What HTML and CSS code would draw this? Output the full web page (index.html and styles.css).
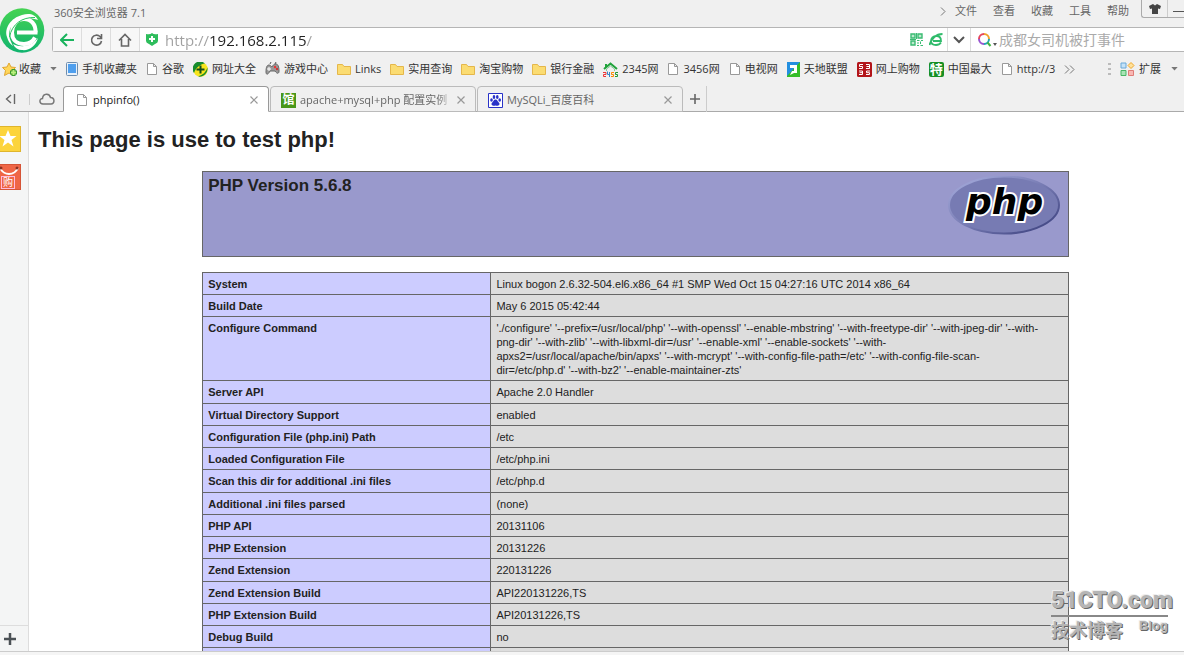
FILE: index.html
```html
<!DOCTYPE html>
<html lang="zh-CN">
<head>
<meta charset="utf-8">
<title>phpinfo()</title>
<link rel="stylesheet" href="styles.css">
</head>
<body>
<svg class="defs" width="0" height="0" aria-hidden="true">
  <symbol id="file" viewBox="0 0 12 14"><path d="M1.5 1.5h6l3 3v8h-9zM7.500 1.500v3h3" fill="#fff" stroke="#999"/></symbol>
  <symbol id="folder" viewBox="0 0 14 14"><path d="M.5 2.500h5l1.500 2h6.500v8H.5z" fill="#fbdc72" stroke="#e5b74a"/></symbol>
  <symbol id="close" viewBox="0 0 8 8"><path d="M.5.5l7 7M7.500.5l-7 7" fill="none" stroke="#999" stroke-width="1.200"/></symbol>
  <symbol id="caret" viewBox="0 0 8 5"><path d="M0 0h8L4 4.500z" fill="#777"/></symbol>
</svg>
<header class="chrome">
  <div class="top">
    <svg class="logo" viewBox="0 0 46 46" role="img" aria-label="360">
      <defs><linearGradient id="lg" x2="0" y2="1"><stop stop-color="#45d352"/><stop offset="1" stop-color="#10b36f"/></linearGradient></defs>
      <circle cx="22" cy="22.500" r="22.300" fill="url(#lg)"/>
      <path d="M35.500 24.500C36 16 31 11 24 11S12 17 12 24.500 17 36 24 36c5 0 9-2.500 11-6.500" fill="none" stroke="#fff" stroke-width="4"/>
      <path d="M17 22.500h20.500v4H17z" fill="#fff"/>
      <path d="M38 12C35 6 29 5 22 7 11 10 4 20 7 29c1 4 3 7 6 9-3-6-5-10-3-17C13 13 25 7 38 12z" fill="#fff"/>
      <path d="M35 9.500C22 9 12 16 9.500 29" fill="none" stroke="#27c55e" stroke-width="1"/>
      <path d="M13 36c8 4 18 3 25-6-2 8-9 13-16 12-4 0-7-2-9-6z" fill="#fff"/>
    </svg>
    <div class="rows">
      <div class="titlebar">
        <span class="apptitle">360安全浏览器 7.1</span>
        <nav class="menu">
          <svg width="6" height="9"><path d="M1 .5l4 4-4 4" fill="none" stroke="#777"/></svg>
          <button>文件</button><button>查看</button><button>收藏</button><button>工具</button><button>帮助</button>
        </nav>
        <div class="winbox">
          <button aria-label="皮肤"><svg width="12" height="10"><path d="M4 0l2 1.500L8 0l4 2-1 3-2-.5V10H3V4.500L1 5 0 2z" fill="#444"/></svg></button>
          <button aria-label="最小化"><svg width="11" height="10"><path d="M0 7.500h11" stroke="#555"/></svg></button>
        </div>
      </div>
      <div class="address">
        <button class="nav" aria-label="后退"><svg width="14" height="14"><path d="M7 1L1 7l6 6M1.500 7H14" fill="none" stroke="#19b35d" stroke-width="2"/></svg></button>
        <button class="nav" aria-label="刷新"><svg width="13" height="14"><path d="M11.500 8A5 5 0 1 1 10 3.500l1.500 1.500M11.500 1v4.500H7" fill="none" stroke="#666" stroke-width="1.600"/></svg></button>
        <button class="nav" aria-label="主页"><svg width="14" height="14"><path d="M1 7.500L7 1.500l6 6M3.500 6v7h7V6" fill="none" stroke="#666" stroke-width="1.600"/></svg></button>
        <svg class="shield" width="12" height="13"><path d="M0 1q4 1 6-1 2 2 6 1v7q0 2-3 3l-3 2-3-2Q0 10 0 8z" fill="#2ebd5c"/><path d="M6 3v6M3 6h6" stroke="#fff" stroke-width="2"/></svg>
        <input class="url" type="text" aria-label="地址" value="http://192.168.2.115/">
        <button class="tool" aria-label="二维码"><svg width="13" height="13"><path d="M1 1h4v4H1zM8 1h4v4H8zM1 8h4v4H1z" fill="#bfe9cf" stroke="#3abb72" stroke-width="1.400"/><path d="M7 7.500h2.500M11 7.500h2M8 9v2M10.500 8.500V11M7 12.500h2M10.500 12.500H13M6.500 0v6M0 6.500h6" fill="none" stroke="#3abb72"/></svg></button>
        <button class="tool" aria-label="极速模式"><svg width="14" height="13"><path d="M4 8h8c0-4-2-5-4.500-5C4 3 2 5 2 8c0 3 2 4 5 4 2 0 4-1 5-2.500M.5 12C2 6 7 1 13.500 1" fill="none" stroke="#30bb6b" stroke-width="1.800"/></svg></button>
        <button class="drop" aria-label="展开"><svg width="12" height="8"><path d="M1 1l5 5 5-5" fill="none" stroke="#555" stroke-width="2"/></svg></button>
        <svg class="mag" width="22" height="15"><path d="M7 2a5 5 0 0 0-5 5" stroke="#e5465c"/><path d="M2 7a5 5 0 0 0 5 5" stroke="#9855d0"/><path d="M7 12a5 5 0 0 0 5-5" stroke="#22a6b4"/><path d="M12 7a5 5 0 0 0-5-5" stroke="#f0a22c"/><path d="M10.500 10.500l3 3.500" stroke="#42b440"/><path class="solid" d="M16 11h4l-2 3z"/></svg>
        <input class="search" type="text" aria-label="搜索" placeholder="成都女司机被打事件">
      </div>
    </div>
  </div>
  <nav class="bookmarks">
    <a class="bm fav" href="#"><svg width="16" height="15"><path d="M7 1l2 4 4.500.5-3 3 1 5L7 11l-4.500 2.500 1-5-3-3L5 5z" fill="#ffd65a" stroke="#e0a62e"/><path d="M11.500 7v7M8 10.500h7" stroke="#3a9a30" stroke-width="4"/><path d="M11.500 8v5M9 10.500h5" stroke="#b9f07c" stroke-width="2"/></svg>收藏<svg class="tri" width="7" height="4"><use href="#caret"/></svg></a>
    <a class="bm" href="#"><svg width="12" height="14"><rect x=".5" y=".5" width="11" height="13" rx="1" fill="#e9f1fa" stroke="#6d8dae"/><path d="M2 2h8v9H2z" fill="#4f9fee"/></svg>手机收藏夹</a>
    <a class="bm" href="#"><svg width="12" height="14"><use href="#file"/></svg>谷歌</a>
    <a class="bm" href="#"><svg width="15" height="15"><circle cx="7.500" cy="7.500" r="7.300" fill="#f7e51c"/><path d="M1 11A7.300 7.300 0 0 1 12 1.500C8 2 3 5 1 11zM5 14.500c5 1 10-3 9.500-9C13 10 10 13 5 14.500z" fill="#168c2e"/><path d="M7.500 3.500v8M3.500 7.500h8" stroke="#164f1b" stroke-width="2"/></svg>网址大全</a>
    <a class="bm" href="#"><svg width="15" height="14"><path d="M1 10c0-5 1-7 3-7 1 0 2 1 3 2 1-2 2-3 4-3 2 0 3 3 3 7 0 3-2 3-4 0H5c-2 4-4 4-4 1z" fill="#999" stroke="#666"/><path d="M4 5v4M2 7h4" stroke="#fff"/><circle cx="10" cy="5" r="1.200" fill="#e33"/><circle cx="12" cy="7" r="1.200" fill="#c33"/><path d="M5 2l1-2M10 2l1-2" stroke="#555"/></svg>游戏中心</a>
    <a class="bm" href="#"><svg width="14" height="14"><use href="#folder"/></svg>Links</a>
    <a class="bm" href="#"><svg width="14" height="14"><use href="#folder"/></svg>实用查询</a>
    <a class="bm" href="#"><svg width="14" height="14"><use href="#folder"/></svg>淘宝购物</a>
    <a class="bm" href="#"><svg width="14" height="14"><use href="#folder"/></svg>银行金融</a>
    <a class="bm" href="#"><svg width="15" height="15"><path d="M1 7l6.500-5.500L14 7M3 2v3" fill="none" stroke="#20a33b" stroke-width="2"/><path d="M3.500 9V7l4-3 4 3v2" fill="none" stroke="#8bc99a"/><path d="M0 10.500h3v2H.5v2H3" fill="none" stroke="#e33"/><path d="M4.500 9.500v3H7M6.500 10v5" fill="none" stroke="#38c"/><path d="M11 10.500H8.500v2h2v2H8" fill="none" stroke="#f80"/><path d="M15 10.500h-2.500v2h2v2h-2.500" fill="none" stroke="#293"/></svg>2345网</a>
    <a class="bm" href="#"><svg width="12" height="14"><use href="#file"/></svg>3456网</a>
    <a class="bm" href="#"><svg width="12" height="14"><use href="#file"/></svg>电视网</a>
    <a class="bm" href="#"><svg width="13" height="15"><path d="M0 0h13v15H0z" fill="#35bd27"/><path d="M0 0h13L0 14z" fill="#238fe0"/><path d="M3 3h7v8H7l-4 2 2-4h2V6H3z" fill="#fff"/></svg>天地联盟</a>
    <a class="bm" href="#"><svg width="15" height="15"><rect width="15" height="15" rx="1.500" fill="#b3151a"/><path d="M6 2.500H2.500v2h3v2H2M9 2.500h3.500v4H9M9.500 4.500h3M2 9h3.500v3.500H2M2.500 10.700h3M13 9H9.500v1.700h3v1.800H9" fill="none" stroke="#fff"/></svg>网上购物</a>
    <a class="bm" href="#"><span class="te">特</span>中国最大</a>
    <a class="bm" href="#"><svg width="12" height="14"><use href="#file"/></svg>http://3</a>
    <button class="more" aria-label="更多"><svg width="11" height="9"><path d="M1 .5l4 4-4 4M6 .5l4 4-4 4" fill="none" stroke="#777"/></svg></button>
    <svg class="dots" width="3" height="12"><path d="M0 1h3M0 6h3M0 11h3" stroke="#bbb" stroke-width="2"/></svg>
    <a class="bm ext" href="#"><svg width="15" height="15"><path d="M1 1h5v5H1z" fill="#c5e2f8" stroke="#68a8d8"/><path d="M11 .5l3 3-3 3-3-3z" fill="#ffe19a" stroke="#efa629"/><path d="M1 8.500h5v5H1z" fill="#a9e3b6" stroke="#48b565"/><path d="M8.500 8.500h5v5h-5z" fill="#f9b8b4" stroke="#df7c78"/></svg>扩展<svg class="tri" width="7" height="4"><use href="#caret"/></svg></a>
  </nav>
  <div class="tabs">
    <button class="tbtn" aria-label="侧栏"><svg width="11" height="10"><path d="M6 1L1.500 5 6 9M9.500 0v10" fill="none" stroke="#666" stroke-width="1.400"/></svg></button>
    <button class="tbtn cloud" aria-label="云"><svg width="16" height="12"><path d="M4 11C0 11 0 5.500 3.500 5.500 4 0 10.500 0 11.500 4.500 16 4.500 16 11 12 11z" fill="none" stroke="#777" stroke-width="1.500"/></svg></button>
    <div class="tab active"><svg width="12" height="14"><use href="#file"/></svg><span>phpinfo()</span><button aria-label="关闭"><svg width="8" height="8"><use href="#close"/></svg></button></div>
    <div class="tab"><b class="guan">馆</b><span class="fade">apache+mysql+php 配置实例</span><button aria-label="关闭"><svg width="8" height="8"><use href="#close"/></svg></button></div>
    <div class="tab"><svg width="15" height="15"><path d="M.5.5h14v14H.5z" fill="#fff" stroke="#2932c8"/><g fill="#2932c8"><ellipse cx="3.500" cy="7" rx="1.300" ry="1.800"/><ellipse cx="6" cy="4" rx="1.300" ry="1.900"/><ellipse cx="9.300" cy="4" rx="1.300" ry="1.900"/><ellipse cx="11.700" cy="7" rx="1.300" ry="1.800"/><path d="M7.500 6.500c2 0 2 2 3.500 3.200 1.500 2-.5 3.500-3.500 2.800-3 .7-5-.8-3.500-2.800C5.500 8.500 5.500 6.500 7.500 6.500z"/></g></svg><span>MySQLi_百度百科</span><button aria-label="关闭"><svg width="8" height="8"><use href="#close"/></svg></button></div>
    <button class="newtab" aria-label="新标签页"><svg width="10" height="10"><path d="M5 0v10M0 5h10" stroke="#666" stroke-width="1.600"/></svg></button>
  </div>
</header>
<div class="view">
  <aside class="side">
    <button class="app star" aria-label="收藏夹"><svg width="19" height="20"><path d="M8 1l2.500 6h6l-5 4 2 6.500L8 13.500l-5.500 4 2-6.500-5-4h6z" fill="#fff"/></svg></button>
    <button class="app shop" aria-label="购物"><svg width="21" height="11"><path d="M0 3c4 8 14 8 18 0" fill="none" stroke="#fff" stroke-width="1.800"/><circle cx="1" cy="3" r="1.500" fill="#8b3121"/><circle cx="17" cy="3" r="1.500" fill="#8b3121"/></svg><span>购</span></button>
    <button class="add" aria-label="添加"><svg width="12" height="12"><path d="M6 0v12M0 6h12" stroke="#4b5155" stroke-width="2.500"/></svg></button>
  </aside>
  <main class="page">
    <h1>This page is use to test php!</h1>
    <div class="info">
      <div class="version">
        <h2>PHP Version 5.6.8</h2>
        <svg width="114" height="61" viewBox="0 0 114 61">
          <defs><linearGradient id="rim" x2="1" y2="1"><stop stop-color="#aab0e0"/><stop offset=".5" stop-color="#777bb3"/><stop offset="1" stop-color="#353a78"/></linearGradient></defs>
          <ellipse cx="56" cy="29" rx="55" ry="28.500" fill="#777bb3" stroke="url(#rim)" stroke-width="2"/>
          <text class="phpmark" x="18" y="38">php</text>
        </svg>
      </div>
      <table>
        <tbody>
        <tr><th scope="row">System</th><td>Linux bogon 2.6.32-504.el6.x86_64 #1 SMP Wed Oct 15 04:27:16 UTC 2014 x86_64</td></tr>
        <tr><th scope="row">Build Date</th><td>May 6 2015 05:42:44</td></tr>
        <tr><th scope="row">Configure Command</th><td>'./configure' '--prefix=/usr/local/php' '--with-openssl' '--enable-mbstring' '--with-freetype-dir' '--with-jpeg-dir' '--with-<br>png-dir' '--with-zlib' '--with-libxml-dir=/usr' '--enable-xml' '--enable-sockets' '--with-<br>apxs2=/usr/local/apache/bin/apxs' '--with-mcrypt' '--with-config-file-path=/etc' '--with-config-file-scan-<br>dir=/etc/php.d' '--with-bz2' '--enable-maintainer-zts'</td></tr>
        <tr><th scope="row">Server API</th><td>Apache 2.0 Handler</td></tr>
        <tr><th scope="row">Virtual Directory Support</th><td>enabled</td></tr>
        <tr><th scope="row">Configuration File (php.ini) Path</th><td>/etc</td></tr>
        <tr><th scope="row">Loaded Configuration File</th><td>/etc/php.ini</td></tr>
        <tr><th scope="row">Scan this dir for additional .ini files</th><td>/etc/php.d</td></tr>
        <tr><th scope="row">Additional .ini files parsed</th><td>(none)</td></tr>
        <tr><th scope="row">PHP API</th><td>20131106</td></tr>
        <tr><th scope="row">PHP Extension</th><td>20131226</td></tr>
        <tr><th scope="row">Zend Extension</th><td>220131226</td></tr>
        <tr><th scope="row">Zend Extension Build</th><td>API220131226,TS</td></tr>
        <tr><th scope="row">PHP Extension Build</th><td>API20131226,TS</td></tr>
        <tr><th scope="row">Debug Build</th><td>no</td></tr>
        <tr><th scope="row"></th><td></td></tr>
        </tbody>
      </table>
    </div>
    <div class="watermark"><strong>51CTO.com</strong><div><span>技术博客</span><em>Blog</em></div></div>
  </main>
</div>
<footer class="status"></footer>
</body>
</html>
```
FILE: styles.css
```css
* { box-sizing: border-box; }
body {
  margin: 0;
  height: 100vh;
  display: flex;
  flex-direction: column;
  overflow: hidden;
  background: #fff;
  color: #333;
  font: 11px/16px "Open Sans", "Noto Sans CJK SC", sans-serif;
}
button { border: 0; padding: 0; background: none; font: inherit; color: inherit; display: flex; align-items: center; justify-content: center; }
a { color: inherit; text-decoration: none; }
svg { flex: none; display: block; }
.defs { position: absolute; }

.chrome { background: #f0f0f0; flex: none; }
.top { display: flex; height: 52px; }
.logo { width: 46px; height: 46px; margin-top: 8px; }
.rows { flex: 1; min-width: 0; padding-left: 6px; }
.titlebar { display: flex; height: 27px; }
.apptitle { padding: 5px 0 0 2px; flex: 1; color: #666; white-space: nowrap; }
.menu { display: flex; align-items: center; gap: 16px; height: 22px; padding-right: 12px; color: #666; }
.menu svg { margin-right: -7px; }
.winbox { display: flex; height: 18px; border: 1px solid #aaa; border-width: 0 0 1px 1px; border-radius: 0 0 0 3px; }
.winbox button { width: 25px; }
.winbox button + button { width: 17px; border-left: 1px solid #ccc; justify-content: flex-end; }

.address { display: flex; align-items: center; height: 25px; background: #fff; border: 1px solid #b5b5b5; border-right: 0; border-radius: 3px 0 0 3px; }
.nav { width: 29px; height: 23px; background: #f7f7f7; border-right: 1px solid #ddd; }
.shield { margin: 0 7px 0 6px; }
input { border: 0; padding: 0; margin: 0; outline: 0; min-width: 0; height: 22px; font: 14px "Open Sans", "Noto Sans CJK SC", sans-serif; }
.url {
  flex: 1;
  color: transparent;
  background: linear-gradient(to right, #a0a0a0 44px, #222 44px 141px, #a0a0a0 141px);
  background-clip: text;
  -webkit-background-clip: text;
  font-size: 15px;
}
.tool { width: 20px; }
.drop { width: 24px; height: 23px; border: 1px solid #ddd; border-width: 0 1px; margin-left: 1px; }
.mag { fill: none; stroke-width: 2; margin-left: 6px; }
.mag .solid { fill: #555; }
.search { width: 185px; }
.search::placeholder { color: #aaa; opacity: 1; }

.bookmarks { display: flex; align-items: center; height: 34px; padding-left: 2px; gap: 9px; white-space: nowrap; }
.bm { display: flex; align-items: center; gap: 4px; }
.fav { gap: 1px; }
.bm .tri { margin-left: 8px; }
.te { width: 15px; height: 15px; background: #168f24; border-radius: 2px; color: #fff; font-weight: 700; font-size: 13px; line-height: 14px; text-align: center; }
.dots { margin-left: auto; }
.ext { padding-right: 6px; }
.ext .tri { margin-left: 6px; }

.tabs { display: flex; height: 26px; align-items: stretch; box-shadow: inset 0 -1px #aaa; }
.tbtn { width: 31px; padding-right: 10px; }
.cloud { width: 32px; padding: 0; position: relative; }
.cloud::before { content: ""; position: absolute; left: -2px; top: 8px; height: 11px; border-left: 1px solid #ccc; }
.tab { display: flex; align-items: center; width: 206px; padding: 2px 10px 0 10px; gap: 4px; border: 1px solid #bbb; border-radius: 4px 4px 0 0; margin-right: 1px; color: #666; }
.tab span { flex: 1; overflow: hidden; white-space: nowrap; }
.tab.active { background: #fff; border-color: #999; border-bottom-color: #fff; color: #222; padding-left: 12px; gap: 5px; }
.fade { mask-image: linear-gradient(to left, transparent, #000 16px); }
.tab > button { width: 8px; }
.guan { width: 15px; height: 15px; background: #499719; color: #fff; font-size: 12px; line-height: 14px; text-align: center; }
.newtab { width: 23px; border-right: 1px solid #ccc; }

.view { flex: 1; display: flex; min-height: 0; }
.side { width: 29px; display: flex; flex-direction: column; background: #f4f5f5; border-right: 1px solid #ddd; padding-top: 14px; gap: 12px; }
.app { width: 21px; height: 26px; flex: none; }
.star { background: #fcd43c; border: 1px solid #dfb52c; border-left: 0; justify-content: flex-start; }
.shop { background: #ef6646; border: 1px solid #d55436; border-left: 0; flex-direction: column; color: #fff; }
.shop span { font-size: 10px; line-height: 11px; padding: 0 1px; margin-right: 4px; border: 1px solid #fbd; }
.add { margin-top: auto; height: 26px; border-top: 1px solid #ddd; padding-right: 9px; }

.page { flex: 1; min-width: 0; overflow: hidden; position: relative; background: #fff; color: #222; font: 11px/14px "Liberation Sans", Arial, sans-serif; }
h1 { margin: 14px 0 17px 9px; font-size: 22px; line-height: 28px; }
.info { margin-left: 15%; width: 75%; }
.version { height: 86px; display: flex; justify-content: space-between; background: #9999cc; border: 1px solid #666; padding: 4px 6px 4px 5px; margin-bottom: 15px; }
h2 { margin: 0; font-size: 17px; line-height: 20px; }
.phpmark { font: italic bold 36px "DejaVu Sans", sans-serif; fill: #000; stroke: #fff; stroke-width: 4px; paint-order: stroke; }
table { width: 100%; border-collapse: collapse; table-layout: fixed; }
th, td { border: 1px solid #666; padding: 4px 5px 3px; text-align: left; vertical-align: top; height: 22px; }
tr:nth-child(4n) th, tr:nth-child(4n) td { padding-bottom: 4px; }
th { width: 33.3%; background: #ccccff; }
td { background: #ddd; white-space: nowrap; }
.watermark { position: absolute; right: 16px; bottom: 10px; width: 117px; color: #b5b5b5; text-shadow: 1px 1px #666, -1px -1px #eee; }
.watermark strong { display: block; font: 900 23px/28px Roboto, "Liberation Sans", sans-serif; border-bottom: 2px solid #888; white-space: nowrap; }
.watermark div { display: flex; justify-content: space-between; font: bold 18px/24px "Noto Sans CJK SC", sans-serif; }
.watermark em { font: bold 13px/18px "Liberation Sans", sans-serif; }
.status { height: 4px; flex: none; background: #f5f5f5; border-top: 1px solid #ccc; }
```
